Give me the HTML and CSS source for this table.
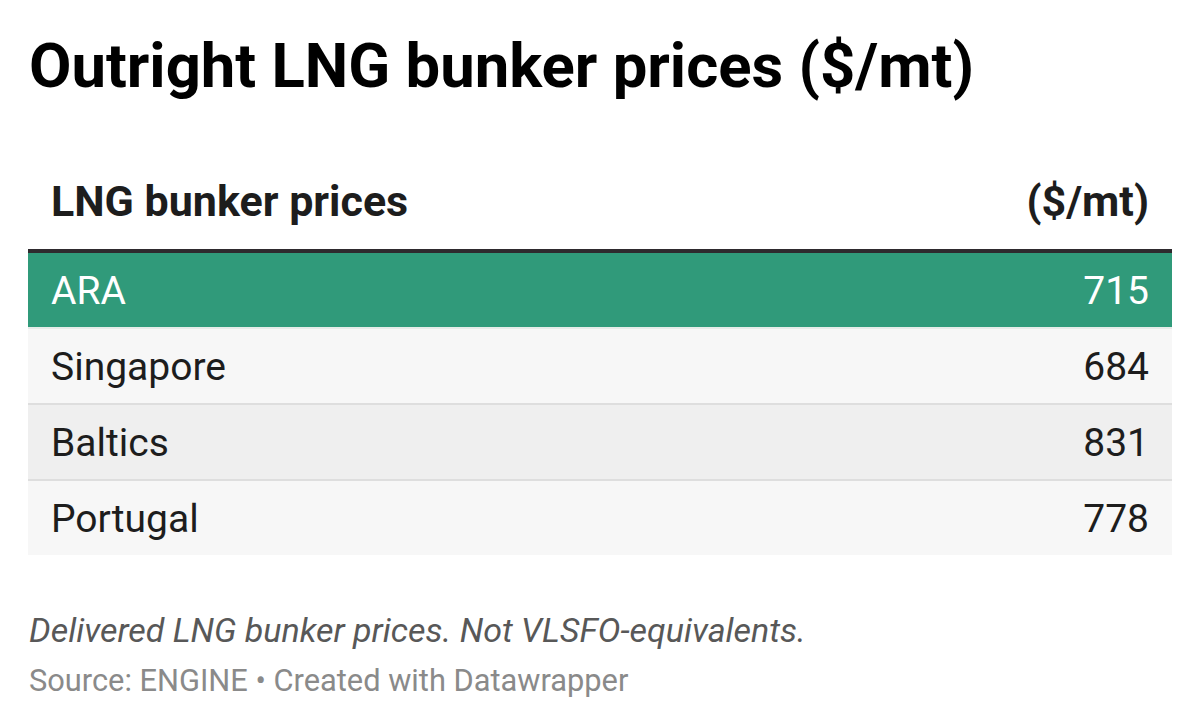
FILE: index.html
```html
<!DOCTYPE html>
<html>
<head>
<meta charset="utf-8">
<link rel="stylesheet" href="styles.css">
</head>
<body>
<div class="chart">
  <h1 class="title">Outright LNG bunker prices ($/mt)</h1>
  <table class="tbl">
    <thead>
      <tr><th class="l">LNG bunker prices</th><th class="r">($/mt)</th></tr>
    </thead>
    <tbody>
      <tr class="hl"><td class="l">ARA</td><td class="r">715</td></tr>
      <tr class="odd"><td class="l">Singapore</td><td class="r">684</td></tr>
      <tr class="even"><td class="l">Baltics</td><td class="r">831</td></tr>
      <tr class="odd"><td class="l">Portugal</td><td class="r">778</td></tr>
    </tbody>
  </table>
  <p class="note">Delivered LNG bunker prices. Not VLSFO-equivalents.</p>
  <p class="source">Source: ENGINE • Created with Datawrapper</p>
</div>
</body>
</html>
```
FILE: styles.css
```css
html, body { margin: 0; padding: 0; background: #fff; }
body { font-family: Roboto, "Liberation Sans", sans-serif; color: #1d1d1d; }
.chart { padding: 30px 28px 0 28px; }
.title { margin: 0 0 0 1px; font-size: 61.6px; font-weight: 700; line-height: 72px; color: #000; }
.tbl { width: 100%; border-collapse: collapse; margin-top: 74px; }
.tbl th { font-size: 43px; font-weight: 700; color: #1d1d1d; padding: 0 23px 23px 23px; line-height: 50px; border-bottom: 4px solid #2e2a2e; }
.tbl td { font-size: 39px; line-height: 44px; padding: 16px 23px 14px 23px; border-bottom: 2px solid #dedede; }
.l { text-align: left; }
.r { text-align: right; }
.hl td { background: #309a7a; color: #fff; border-bottom-color: #e6ece9; }
.odd td { background: #f7f7f7; }
.even td { background: #efefef; }
.tbl tr:last-child td { border-bottom: none; }
.note { margin: 55px 0 0 1px; font-size: 34px; font-style: italic; color: #585858; line-height: 40px; }
.source { margin: 11px 0 0 1px; font-size: 30.8px; color: #8a8a8a; line-height: 40px; }
```
